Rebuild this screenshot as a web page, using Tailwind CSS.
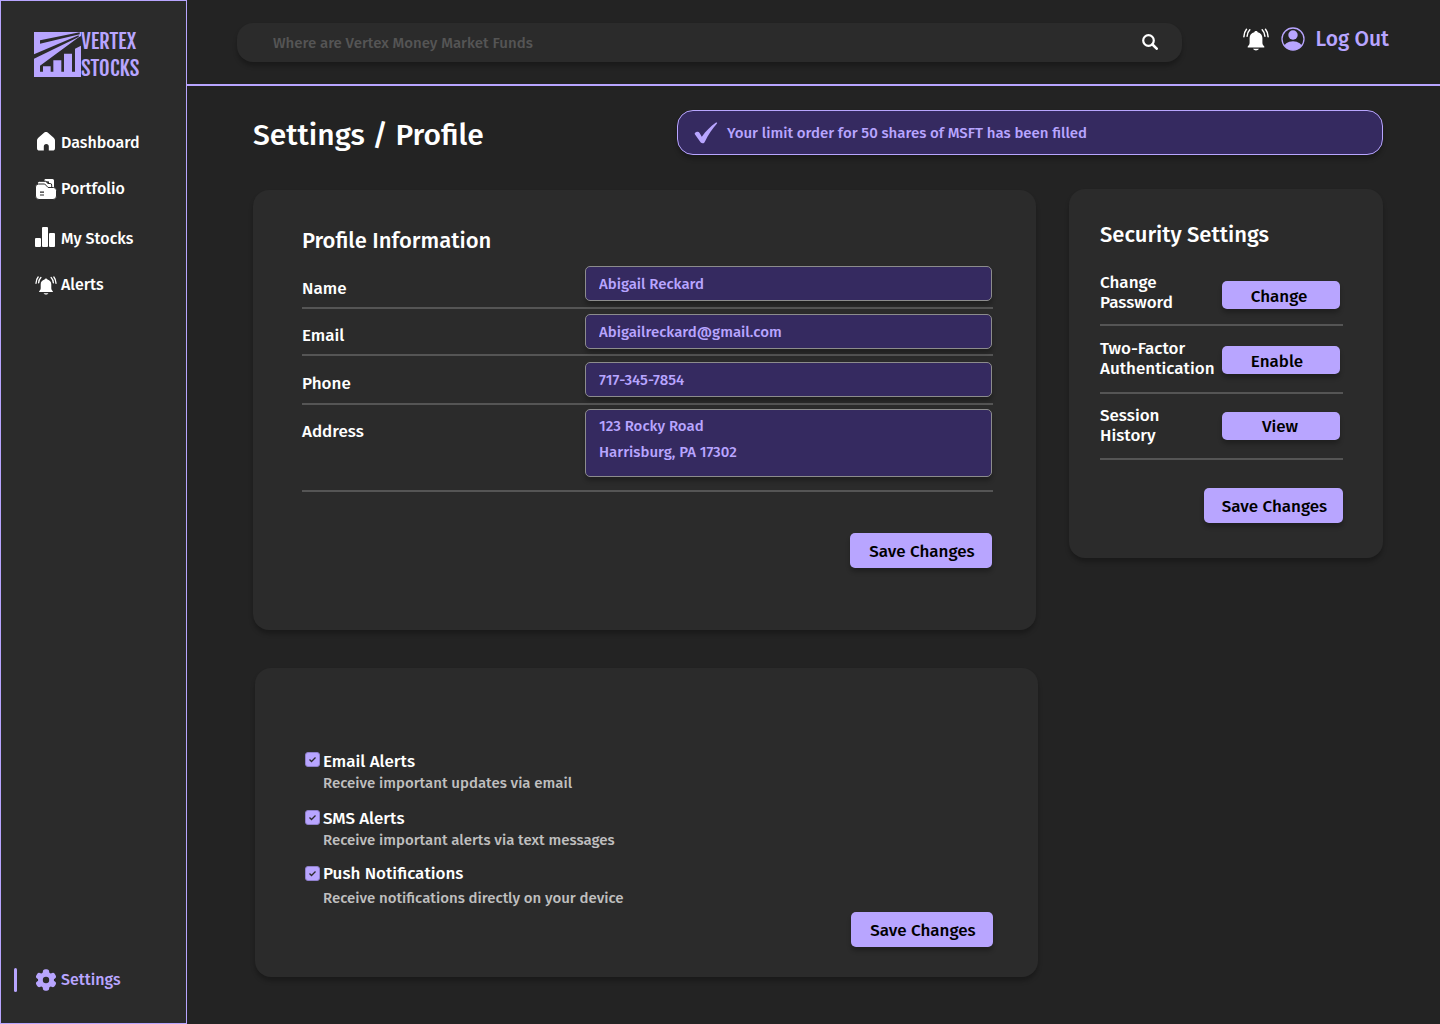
<!DOCTYPE html>
<html lang="en">
<head>
  <meta charset="UTF-8" />
  <meta name="viewport" content="width=device-width, initial-scale=1.0" />
  <title>Vertex Stocks - Settings</title>
  <script src="https://cdn.jsdelivr.net/npm/@tailwindcss/browser@4"></script>
  <style>
    body {
      font-family: 'Fira Sans', 'Noto Sans', sans-serif;
      font-weight: 500;
    }
    .logo-text {
      font-family: 'Fjalla One', 'Roboto Condensed', sans-serif;
    }
  </style>
</head>
<body class="min-h-screen flex bg-[#232323] text-white">

  <!-- Sidebar -->
  <aside class="w-[187px] shrink-0 min-h-screen flex flex-col bg-[#2b2b2b] border border-[#b8a5ff]">
    <a href="#" class="flex items-center mt-[27px] ml-[33px] text-[#b8a5ff]" aria-label="Vertex Stocks">
      <svg class="w-[47px] h-[46px] shrink-0" viewBox="0 0 141 138">
        <path fill="#b8a5ff" d="M0 0h141v135H0z" />
        <g fill="#2b2b2b">
          <path d="M18 25 137 1v6L18 35z" />
          <path d="M0 67 134 10v5L0 80z" />
          <path d="M18 101 132 17 141 12V41L123 50V119H114V65H90V119H82V85H58V119H50V103H27V119H18z" />
        </g>
      </svg>
      <span class="logo-text text-[21px] leading-[27px] font-normal">VERTEX<br>STOCKS</span>
    </a>

    <nav class="flex-grow flex flex-col mt-[49px] pl-[34px] text-[16px] leading-6">
      <a href="#" class="flex items-center gap-1 h-6">
        <svg class="w-[22px] h-[22px]" viewBox="0 1 22 22" fill="#fff">
          <path d="M9.300 1.600a2.600 2.600 0 0 1 3.400 0l5.700 4.800c1 .8 1.600 1.900 1.600 3.200V17a2.600 2.600 0 0 1-2.600 2.600h-3.600V15.500a2.500 2.500 0 0 0-5 0v4.100H4.600A2.600 2.600 0 0 1 2 17V9.600c0-1.300.6-2.400 1.600-3.200z" />
        </svg>
        Dashboard
      </a>
      <a href="#" class="flex items-center gap-1 h-6 mt-[22px]">
        <svg class="w-[22px] h-[22px]" viewBox="0 0 22 22">
          <path fill="#fff" d="M9.500 3V2a1 1 0 0 1 1-1h7A1.500 1.500 0 0 1 19 2.500V10h-5V3.500z" />
          <path fill="#fff" stroke="#2b2b2b" d="M2.500 7V5a1.700 1.700 0 0 1 1.700-1.700h6.500l2.300 2.200h2.200a1.500 1.500 0 0 1 1.500 1.500v4H10z" />
          <path fill="#fff" stroke="#2b2b2b" d="M.5 9A3 3 0 0 1 3.500 6h6.200l3.400 3.500h5.400a3 3 0 0 1 3 3V18a3.500 3.500 0 0 1-3.500 3.500H4A3.500 3.500 0 0 1 .5 18z" />
          <path d="M5 14.200h4M5 17h4" stroke="#2b2b2b" stroke-width="1.200" />
        </svg>
        Portfolio
      </a>
      <a href="#" class="flex items-center gap-1 h-6 mt-[26px]">
        <svg class="w-[22px] h-6" viewBox="0 0 22 24" fill="#fff">
          <rect y="11" width="6" height="9" rx="1" />
          <rect x="7" width="6" height="20" rx="1" />
          <rect x="14" y="6" width="6" height="14" rx="1" />
        </svg>
        My Stocks
      </a>
      <a href="#" class="flex items-center gap-1 h-6 mt-[22px]">
        <svg class="w-[22px] h-[19px]" viewBox="0 0 26 23">
          <path fill="#fff" d="M13 3c.9 0 1.500.5 1.700 1.300 2.900.8 4.700 2.900 4.700 5.700v4.500c0 1.600.6 2.800 1.900 4v.9H4.700v-.9c1.300-1.200 1.900-2.400 1.900-4V10c0-2.800 1.800-4.900 4.700-5.700C11.500 3.500 12.100 3 13 3zM10 20.800h6c-.8 1.100-1.700 1.600-3 1.600s-2.200-.5-3-1.600z" />
          <path fill="none" stroke="#fff" stroke-width="1.600" stroke-linecap="round" d="M3.500 1.200C1.800 3.200 1 5.600.9 8.800M6.800 1.800C5.100 3.500 4.300 5.500 4.100 8.200M22.500 1.200c1.700 2 2.500 4.400 2.600 7.600M19.200 1.800c1.700 1.700 2.500 3.700 2.700 6.400" />
        </svg>
        Alerts
      </a>

      <a href="#" class="relative flex items-center gap-1 h-6 mt-auto mb-[31px] text-[#b8a5ff]" aria-current="page">
        <span class="absolute -left-[21px] top-0 w-[3px] h-6 rounded-full bg-[#b8a5ff]"></span>
        <svg class="w-[22px] h-[22px]" viewBox="0 0 22 22">
          <g fill="#b8a5ff">
            <circle cx="11" cy="11" r="8" />
            <rect x="7.800" y="0.300" width="6.400" height="21.400" rx="2.600" />
            <rect x="7.800" y="0.300" width="6.400" height="21.400" rx="2.600" transform="rotate(60 11 11)" />
            <rect x="7.800" y="0.300" width="6.400" height="21.400" rx="2.600" transform="rotate(120 11 11)" />
          </g>
          <circle cx="11" cy="11" r="3.200" fill="#2b2b2b" />
        </svg>
        Settings
      </a>
    </nav>
  </aside>

  <div class="flex-1 min-w-0">
    <!-- Top bar -->
    <header class="h-[86px] flex items-start border-b-2 border-[#b8a5ff] pl-[50px] pr-[51px]">
      <form class="flex-1 flex items-center h-[39px] mt-[23px] pl-9 pr-6 rounded-2xl bg-[#2b2b2b] shadow-[0_4px_4px_rgba(0,0,0,0.25)]">
        <input type="search" aria-label="Search" placeholder="Where are Vertex Money Market Funds" class="flex-1 pt-0.5 bg-transparent text-[15px] outline-none placeholder:text-[#555555]" />
        <button type="submit" aria-label="Search" class="mb-0.5">
          <svg class="w-4 h-4" viewBox="0 0 16 16" fill="none" stroke="#fff" stroke-width="2.200" stroke-linecap="round">
            <circle cx="6.500" cy="6.500" r="5.300" />
            <path d="m10.500 10.500 4.200 4.200" stroke-width="2.600" />
          </svg>
        </button>
      </form>
      <button class="ml-[61px] mt-7" aria-label="Notifications">
        <svg class="w-[26px] h-[23px]" viewBox="0 0 26 23">
          <path fill="#fff" d="M13 3c.9 0 1.500.5 1.700 1.300 2.900.8 4.700 2.900 4.700 5.700v4.500c0 1.600.6 2.800 1.900 4v.9H4.700v-.9c1.300-1.200 1.900-2.400 1.900-4V10c0-2.800 1.800-4.900 4.700-5.700C11.500 3.500 12.100 3 13 3zM10 20.800h6c-.8 1.100-1.700 1.600-3 1.600s-2.200-.5-3-1.600z" />
          <path fill="none" stroke="#fff" stroke-width="1.500" stroke-linecap="round" d="M3.500 1.200C1.800 3.200 1 5.600.9 8.800M6.800 1.800C5.100 3.500 4.300 5.500 4.100 8.200M22.500 1.200c1.700 2 2.500 4.400 2.600 7.600M19.200 1.800c1.700 1.700 2.500 3.700 2.700 6.400" />
        </svg>
      </button>
      <a href="#" class="flex items-center gap-[11px] ml-3 mt-[23px] text-[21px] leading-8 text-[#b8a5ff]">
        <svg class="w-6 h-6" viewBox="0 0 24 24">
          <clipPath id="avatar"><circle cx="12" cy="12" r="11" /></clipPath>
          <circle cx="12" cy="12" r="11" fill="none" stroke="#b8a5ff" stroke-width="1.300" />
          <circle cx="12" cy="8" r="4.700" fill="#b8a5ff" />
          <ellipse cx="12" cy="21" rx="9.500" ry="6.800" fill="#b8a5ff" clip-path="url(#avatar)" />
        </svg>
        Log Out
      </a>
    </header>

    <main class="pl-[66px] pr-[57px] pt-6 pb-[47px]">
      <div class="flex items-center">
        <h1 class="w-[424px] pt-1 text-[30px] leading-9">Settings / Profile</h1>
        <div role="status" class="flex-1 flex items-center gap-2 h-[45px] pl-4 rounded-2xl bg-[#352a60] border border-[#b8a5ff] text-[#b8a5ff] text-[15px] shadow-[0_4px_4px_rgba(0,0,0,0.25)]">
          <svg class="w-[25px] h-[22px]" viewBox="0 0 25 22" fill="#b8a5ff">
            <path d="M1 12.500c-.7-1 0-2 1.300-2.500 1.500-.5 2.600-.2 3.300 1l2.200 3.700C12 9 16.500 4.500 22 .600c.7-.5 1.500.1 1 .8-5 5.600-8.600 11-12 18-.6 1.300-1.200 1.800-2.500 1.800-1.200 0-1.800-.4-2.500-1.600z" />
          </svg>
          <span class="pt-0.5">Your limit order for 50 shares of MSFT has been filled</span>
        </div>
      </div>

      <div class="flex items-start gap-[33px] mt-[34px]">
        <div class="flex-1">
          <!-- Profile -->
          <section class="mt-px pt-[35px] pb-[62px] pl-[49px] pr-[43px] rounded-2xl bg-[#2b2b2b] shadow-[0_4px_4px_rgba(0,0,0,0.25)]">
            <h2 class="text-[22px] leading-8 mb-[9px]">Profile Information</h2>
            <form>
              <div class="flex items-start justify-between pb-[6px] border-b-2 border-[#555555]">
                <label for="name" class="pt-[11px] text-[17px] leading-6">Name</label>
                <input id="name" type="text" value="Abigail Reckard" class="w-[407px] h-[35px] mr-px px-[13px] rounded-[5px] bg-[#352a60] border border-[#8c8c8c] text-[#b8a5ff] text-[15px] shadow-[0_4px_4px_rgba(0,0,0,0.25)]" />
              </div>
              <div class="flex items-start justify-between pt-[5px] pb-[5px] border-b-2 border-[#555555]">
                <label for="email" class="pt-[10px] text-[17px] leading-6">Email</label>
                <input id="email" type="email" value="Abigailreckard@gmail.com" class="w-[407px] h-[35px] mr-px px-[13px] rounded-[5px] bg-[#352a60] border border-[#8c8c8c] text-[#b8a5ff] text-[15px] shadow-[0_4px_4px_rgba(0,0,0,0.25)]" />
              </div>
              <div class="flex items-start justify-between pt-[6px] pb-[6px] border-b-2 border-[#555555]">
                <label for="phone" class="pt-[10px] text-[17px] leading-6">Phone</label>
                <input id="phone" type="tel" value="717-345-7854" class="w-[407px] h-[35px] mr-px px-[13px] rounded-[5px] bg-[#352a60] border border-[#8c8c8c] text-[#b8a5ff] text-[15px] shadow-[0_4px_4px_rgba(0,0,0,0.25)]" />
              </div>
              <div class="flex items-start justify-between pt-1 pb-[13px] border-b-2 border-[#555555]">
                <label for="address" class="pt-[11px] text-[17px] leading-6">Address</label>
                <textarea id="address" class="w-[407px] h-[68px] mr-px px-[13px] pt-[3px] resize-none overflow-hidden rounded-[5px] bg-[#352a60] border border-[#8c8c8c] text-[#b8a5ff] text-[15px] leading-[26px] shadow-[0_4px_4px_rgba(0,0,0,0.25)]">123 Rocky Road
Harrisburg, PA 17302</textarea>
              </div>
              <button type="button" class="block w-[142px] h-[35px] mt-[41px] ml-auto mr-px pt-0.5 pl-0.5 rounded-[5px] bg-[#b8a5ff] text-black text-[17px] shadow-[0_4px_4px_rgba(0,0,0,0.25)]">Save Changes</button>
            </form>
          </section>

          <!-- Alerts -->
          <section class="mt-[38px] ml-0.5 -mr-0.5 pt-[81px] pb-[30px] pl-[50px] pr-[45px] rounded-2xl bg-[#2b2b2b] shadow-[0_4px_4px_rgba(0,0,0,0.25)]">
            <div class="flex items-start gap-[3px]">
              <span class="relative mt-[3px] w-[15px] h-[15px]">
                <input id="email-alerts" type="checkbox" checked class="block appearance-none w-[15px] h-[15px] rounded-[3px] border border-[#8f80cc] checked:bg-[#b8a5ff]" />
                <svg class="absolute inset-0 w-[15px] h-[15px] pointer-events-none" viewBox="0 0 15 15" fill="none" stroke="#2b2b2b" stroke-width="1.300"><path d="m4.500 7.500 2 2 4-4" /></svg>
              </span>
              <div>
                <label for="email-alerts" class="block text-[17px] leading-[26px]">Email Alerts</label>
                <p class="text-[15px] leading-4 text-[#bfbfbf]">Receive important updates via email</p>
              </div>
            </div>
            <div class="flex items-start gap-[3px] mt-[15px]">
              <span class="relative mt-1 w-[15px] h-[15px]">
                <input id="sms-alerts" type="checkbox" checked class="block appearance-none w-[15px] h-[15px] rounded-[3px] border border-[#8f80cc] checked:bg-[#b8a5ff]" />
                <svg class="absolute inset-0 w-[15px] h-[15px] pointer-events-none" viewBox="0 0 15 15" fill="none" stroke="#2b2b2b" stroke-width="1.300"><path d="m4.500 7.500 2 2 4-4" /></svg>
              </span>
              <div>
                <label for="sms-alerts" class="block text-[17px] leading-[26px]">SMS Alerts</label>
                <p class="text-[15px] leading-4 text-[#bfbfbf]">Receive important alerts via text messages</p>
              </div>
            </div>
            <div class="flex items-start gap-[3px] mt-[13px]">
              <span class="relative mt-[5px] w-[15px] h-[15px]">
                <input id="push-alerts" type="checkbox" checked class="block appearance-none w-[15px] h-[15px] rounded-[3px] border border-[#8f80cc] checked:bg-[#b8a5ff]" />
                <svg class="absolute inset-0 w-[15px] h-[15px] pointer-events-none" viewBox="0 0 15 15" fill="none" stroke="#2b2b2b" stroke-width="1.300"><path d="m4.500 7.500 2 2 4-4" /></svg>
              </span>
              <div>
                <label for="push-alerts" class="block text-[17px] leading-[26px]">Push Notifications</label>
                <p class="mt-[3px] text-[15px] leading-4 text-[#bfbfbf]">Receive notifications directly on your device</p>
              </div>
            </div>
            <button type="button" class="block w-[142px] h-[35px] mt-[6px] ml-auto pt-0.5 pl-0.5 rounded-[5px] bg-[#b8a5ff] text-black text-[17px] shadow-[0_4px_4px_rgba(0,0,0,0.25)]">Save Changes</button>
          </section>
        </div>

        <!-- Security -->
        <section class="w-[314px] pt-[30px] pb-[35px] pl-[31px] pr-10 rounded-2xl bg-[#2b2b2b] shadow-[0_4px_4px_rgba(0,0,0,0.25)]">
          <h2 class="text-[22px] leading-8">Security Settings</h2>
          <div class="flex items-center justify-between mt-[22px] pb-[11px] border-b-2 border-[#555555]">
            <span class="text-[17px] leading-5">Change<br>Password</span>
            <button type="button" class="w-[118px] h-7 mt-1 mr-[3px] pt-1 pr-1 rounded-[5px] bg-[#b8a5ff] text-black text-[17px] leading-6 shadow-[0_4px_4px_rgba(0,0,0,0.25)]">Change</button>
          </div>
          <div class="flex items-center justify-between pt-[13px] pb-[13px] border-b-2 border-[#555555]">
            <span class="text-[17px] leading-5">Two-Factor<br>Authentication</span>
            <button type="button" class="w-[118px] h-7 mt-0.5 mr-[3px] pt-1 pr-2 rounded-[5px] bg-[#b8a5ff] text-black text-[17px] leading-6 shadow-[0_4px_4px_rgba(0,0,0,0.25)]">Enable</button>
          </div>
          <div class="flex items-center justify-between pt-3 pb-3 border-b-2 border-[#555555]">
            <span class="text-[17px] leading-5">Session<br>History</span>
            <button type="button" class="w-[118px] h-7 mr-[3px] pt-0.5 pr-0.5 rounded-[5px] bg-[#b8a5ff] text-black text-[17px] leading-6 shadow-[0_4px_4px_rgba(0,0,0,0.25)]">View</button>
          </div>
          <button type="button" class="block w-[139px] h-[35px] mt-7 ml-auto pt-0.5 pl-0.5 rounded-[5px] bg-[#b8a5ff] text-black text-[17px] shadow-[0_4px_4px_rgba(0,0,0,0.25)]">Save Changes</button>
        </section>
      </div>
    </main>
  </div>

</body>
</html>
